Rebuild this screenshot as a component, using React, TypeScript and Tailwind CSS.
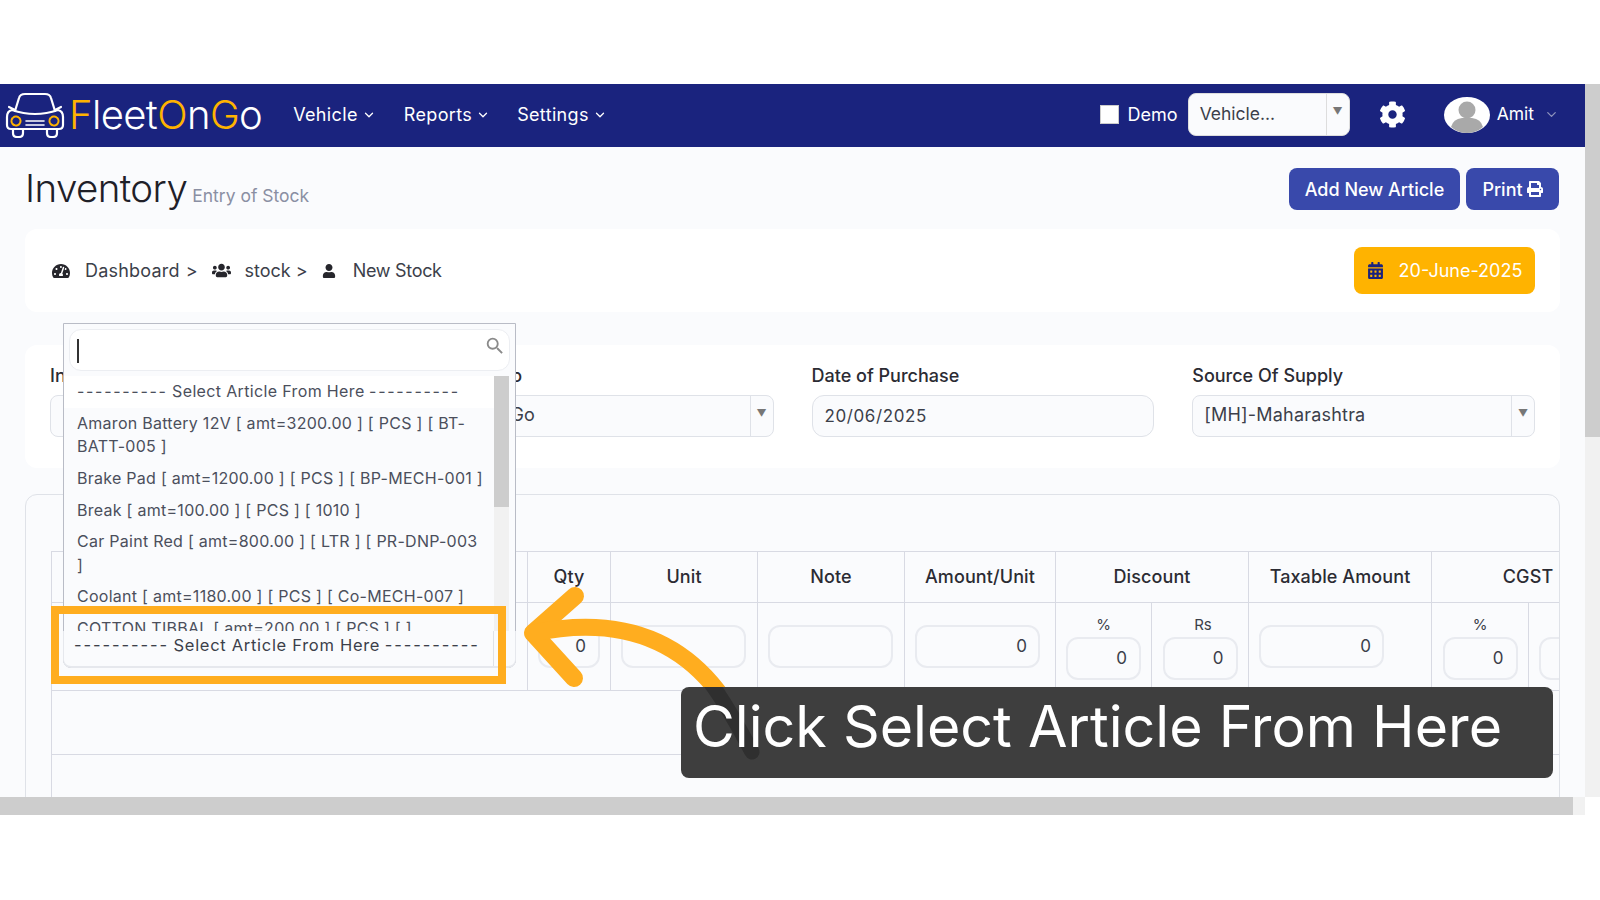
import { FaCalendarAlt, FaCog, FaPrint, FaTachometerAlt, FaUser, FaUsers } from "react-icons/fa";
import { MdSearch } from "react-icons/md";
import { ChevronDown } from "lucide-react";

const listItems = [
  ["Amaron Battery 12V [ amt=3200.00 ] [ PCS ] [ BT-", "BATT-005 ]"],
  ["Brake Pad [ amt=1200.00 ] [ PCS ] [ BP-MECH-001 ]"],
  ["Break [ amt=100.00 ] [ PCS ] [ 1010 ]"],
  ["Car Paint Red [ amt=800.00 ] [ LTR ] [ PR-DNP-003", "]"],
  ["Coolant [ amt=1180.00 ] [ PCS ] [ Co-MECH-007 ]"],
  ["COTTON TIBBAL [ amt=200.00 ] [ PCS ] [ ]"],
];

function CarLogo() {
  return (
    <svg width="62" height="46" viewBox="0 0 62 46" fill="none" stroke="#fff" strokeWidth="2.2" strokeLinecap="round" strokeLinejoin="round">
      <path d="M11 19 L15 6 Q16 2 21 2 H41 Q46 2 47 6 L51 19" />
      <path d="M5 15 L11 18 M57 15 L51 18" />
      <path d="M8 18 Q31 26 54 18 Q59 19 59 25 V33 Q59 37 55 37 H7 Q3 37 3 33 V25 Q3 19 8 18Z" />
      <path d="M22 29 H40 M22 33 H40" strokeWidth="1.6" />
      <path d="M9 37 V41 Q9 45 13 45 H15 Q19 45 19 41 V37 M43 37 V41 Q43 45 47 45 H49 Q53 45 53 41 V37" />
      <circle cx="12" cy="29" r="4.5" stroke="#ffb300" strokeWidth="2" strokeDasharray="2 1" />
      <circle cx="50" cy="29" r="4.5" stroke="#ffb300" strokeWidth="2" strokeDasharray="2 1" />
    </svg>
  );
}

function Avatar() {
  return (
    <svg width="46" height="36" viewBox="0 0 46 36">
      <ellipse cx="23" cy="18" rx="23" ry="18" fill="#fff" />
      <circle cx="23" cy="13" r="8.5" fill="#a9a9a9" />
      <path d="M7 30 Q9 22 18 21 H28 Q37 22 39 30 Q32 36 23 36 Q14 36 7 30Z" fill="#a9a9a9" />
    </svg>
  );
}

function NavItem({ label, className }: { label: string; className: string }) {
  return (
    <div className={`flex items-center gap-[4px] text-[18px] tracking-[0.35px] text-white ${className}`}>
      {label}
      <ChevronDown size={14} strokeWidth={2.2} />
    </div>
  );
}

function FakeSelect({ value, className }: { value: string; className?: string }) {
  return (
    <div className={`flex h-[42px] items-center rounded-lg border border-[#dfe2e8] bg-[#fafbfd] ${className ?? ""}`}>
      <span className="flex-1 truncate pb-[3px] pl-[11px] text-[18px] tracking-[0.2px] text-[#3c3f4a]">{value}</span>
      <span className="flex h-full w-[23px] items-center justify-center border-l border-[#dfe2e8] pb-[6px] text-[10px] text-[#777]">▼</span>
    </div>
  );
}

function Field({ label, children }: { label: string; children: React.ReactNode }) {
  return (
    <div>
      <div className="mb-[7px] h-[24px] text-[18px] font-medium leading-[24px] text-[#2b2b33]">{label}</div>
      {children}
    </div>
  );
}

function CellInput({ value, className }: { value?: string; className: string }) {
  return (
    <div className={`flex items-center justify-end rounded-xl border-2 border-[#e9ebf0] bg-[#fafbfd] text-[17px] text-[#3c3f4a] ${className}`}>
      {value}
    </div>
  );
}

function Th({ children, colSpan }: { children?: React.ReactNode; colSpan?: number }) {
  return (
    <th colSpan={colSpan} className="border border-[#d8dae3] pb-[2px] text-center text-[18px] font-medium tracking-[0.1px] text-[#2b2b33]">
      {children}
    </th>
  );
}

function SubCell({ label, value }: { label: string; value: string }) {
  return (
    <td className="border border-[#d8dae3] align-top">
      <div className="flex flex-col items-center pt-[12px]">
        <span className={`h-[22px] text-[15px] leading-[20px] text-[#3c3f4a] ${label === "Rs" ? "pl-[6px]" : ""}`}>{label}</span>
        <CellInput value={value} className="h-[43px] w-[75px] pr-[12px]" />
      </div>
    </td>
  );
}

function WideCell({ value, width }: { value?: string; width: string }) {
  return (
    <td className="border border-[#d8dae3] px-[10px]">
      <CellInput value={value} className={`h-[43px] pr-[11px] ${width}`} />
    </td>
  );
}

export default function App() {
  return (
    <div className="relative h-[900px] w-[1600px] overflow-hidden bg-white font-['Inter',sans-serif]">
      <div className="h-[84px]" />
      <div className="grid grid-cols-[1585px_15px] grid-rows-[713px_18px]">
        <div className="overflow-hidden bg-[#fafbfd]">
          <nav className="flex h-[63px] items-center bg-[#1a237e] pb-[2px] pl-[4px]">
            <CarLogo />
            <div className="ml-[3px] text-[40px] font-light leading-none tracking-[-0.6px] text-white">
              <span className="text-[#ffb300]">F</span>leet<span className="text-[#ffb300]">O</span>n<span className="text-[#ffb300]">G</span>o
            </div>
            <NavItem label="Vehicle" className="ml-[31px]" />
            <NavItem label="Reports" className="ml-[28px]" />
            <NavItem label="Settings" className="ml-[27px]" />
            <div className="ml-auto h-[19px] w-[19px] border border-[#ccc] bg-white" />
            <span className="ml-[9px] text-[18px] text-white">Demo</span>
            <div className="ml-[10px] flex h-[43px] w-[162px] items-center rounded-lg border border-[#ddd] bg-[#fafbfd]">
              <span className="flex-1 pl-[11px] text-[17.5px] text-[#3c3f4a]">Vehicle...</span>
              <span className="flex h-full w-[23px] items-center justify-center border-l border-[#ddd] pb-[6px] text-[10px] text-[#777]">▼</span>
            </div>
            <FaCog className="ml-[29px] text-white" size={27} />
            <div className="ml-[38px]">
              <Avatar />
            </div>
            <span className="ml-[7px] text-[17.5px] text-white">Amit</span>
            <ChevronDown className="ml-[10px] mr-[26px] text-[#8f93bd]" size={15} />
          </nav>

          <div className="flex h-[63px] items-center justify-between pl-[25px] pr-[26px] pt-[21px]">
            <div className="flex items-baseline">
              <h1 className="text-[38.5px] font-light leading-[40px] tracking-[-0.6px] text-[#1f2028]">Inventory</h1>
              <span className="ml-[5px] text-[17.5px] text-[#8a8fa3]">Entry of Stock</span>
            </div>
            <div className="flex gap-[6px]">
              <button className="h-[42px] w-[171px] rounded-lg bg-[#3949ab] text-[18px] font-medium text-white">Add New Article</button>
              <button className="flex h-[42px] w-[93px] items-center justify-center gap-[4px] rounded-lg bg-[#3949ab] text-[18px] font-medium text-white">
                Print <FaPrint size={16} />
              </button>
            </div>
          </div>

          <div className="mx-[25px] mt-[19px] flex h-[83px] items-center rounded-xl bg-white pl-[27px] pr-[25px] text-[18px] text-[#3c3f4a]">
            <FaTachometerAlt className="text-[#26262c]" size={18} />
            <span className="ml-[15px] tracking-[0.2px]">Dashboard</span>
            <span className="ml-[6px]">&gt;</span>
            <FaUsers className="ml-[14px] text-[#26262c]" size={19} />
            <span className="ml-[14px]">stock</span>
            <span className="ml-[5px]">&gt;</span>
            <FaUser className="ml-[14px] text-[#26262c]" size={14} />
            <span className="ml-[17px] tracking-[-0.3px]">New Stock</span>
            <div className="ml-auto flex h-[47px] w-[181px] items-center justify-center gap-[15px] rounded-lg bg-[#ffb300] text-white">
              <FaCalendarAlt className="text-[#1a237e]" size={17} />
              20-June-2025
            </div>
          </div>

          <div className="mx-[25px] mt-[33px] grid h-[123px] grid-cols-4 gap-x-[38px] rounded-xl bg-white px-[25px] pt-[19px]">
            <Field label="Invoice No">
              <div className="h-[42px] rounded-lg border border-[#dfe2e8] bg-[#fafbfd]" />
            </Field>
            <Field label="Vendor No">
              <FakeSelect value="FleetOnGo" />
            </Field>
            <Field label="Date of Purchase">
              <div className="flex h-[42px] items-center rounded-xl border border-[#dfe2e8] bg-[#fafbfd] pl-[12px] pt-[2px] text-[17px] tracking-[0.6px] text-[#3c3f4a]">20/06/2025</div>
            </Field>
            <Field label="Source Of Supply">
              <FakeSelect value="[MH]-Maharashtra" />
            </Field>
          </div>

          <div className="mx-[25px] mt-[26px] h-[320px] overflow-hidden rounded-t-xl border border-[#dfe2e8] pl-[25px] pt-[56px]">
            <table className="w-[1573px] table-fixed border-collapse">
              <colgroup>
                <col className="w-[476px]" />
                <col className="w-[83px]" />
                <col className="w-[147px]" />
                <col className="w-[147px]" />
                <col className="w-[151px]" />
                <col className="w-[96px]" />
                <col className="w-[97px]" />
                <col className="w-[183px]" />
                <col className="w-[97px]" />
                <col className="w-[96px]" />
              </colgroup>
              <thead>
                <tr className="h-[51px]">
                  <Th>Article</Th>
                  <Th>Qty</Th>
                  <Th>Unit</Th>
                  <Th>Note</Th>
                  <Th>Amount/Unit</Th>
                  <Th colSpan={2}>Discount</Th>
                  <Th>Taxable Amount</Th>
                  <Th colSpan={2}>CGST</Th>
                </tr>
              </thead>
              <tbody>
                <tr className="h-[88px]">
                  <td className="border border-[#d8dae3]" />
                  <td className="border border-[#d8dae3] pl-[10px]">
                    <CellInput value="0" className="h-[43px] w-[62px] pr-[12px]" />
                  </td>
                  <WideCell width="w-[125px]" />
                  <WideCell width="w-[125px]" />
                  <WideCell value="0" width="w-[125px]" />
                  <SubCell label="%" value="0" />
                  <SubCell label="Rs" value="0" />
                  <WideCell value="0" width="w-[125px]" />
                  <SubCell label="%" value="0" />
                  <SubCell label="Rs" value="0" />
                </tr>
                <tr className="h-[64px]">
                  <td colSpan={10} className="border border-[#d8dae3]" />
                </tr>
                <tr className="h-[64px]">
                  <td colSpan={10} className="border border-[#d8dae3]" />
                </tr>
              </tbody>
            </table>
          </div>
        </div>

        <div className="bg-[#f1f1f1]">
          <div className="h-[353px] bg-[#cdcdcd]" />
        </div>
        <div className="bg-[#f1f1f1]">
          <div className="h-full w-[1573px] bg-[#cdcdcd]" />
        </div>
        <div className="bg-white" />
      </div>

      {/* open dropdown */}
      <div className="absolute left-[63px] top-[323px] h-[345px] w-[453px] rounded-b-lg border border-[#b9bcc6] bg-[#fafbfd] text-[16px] text-[#4b4f5c]">
        <div className="relative mx-[5px] mt-[5px] h-[42px] rounded-xl border border-[#eceef2] bg-white">
          <div className="absolute left-[7px] top-[9px] h-[24px] w-[2px] bg-[#333]" />
          <MdSearch className="absolute right-[3px] top-[5px] text-[#8a8a8a]" size={22} />
        </div>
        <div className="flex h-[260px] overflow-hidden pt-[5px]">
          <div className="w-[430px] shrink-0">
            <div className="whitespace-nowrap bg-white py-[4.15px] pl-[13px] leading-[23.4px]">
              <span className="tracking-[1.7px]">----------</span> <span className="tracking-[0.35px]">Select Article From Here</span>{" "}
              <span className="tracking-[1.7px]">----------</span>
            </div>
            {listItems.map((lines) => (
              <div key={lines[0]} className="whitespace-nowrap py-[4.15px] pl-[13px] leading-[23.4px] tracking-[0.27px]">
                {lines.map((line) => (
                  <div key={line}>{line}</div>
                ))}
              </div>
            ))}
          </div>
          <div className="w-[15px] bg-[#f1f1f1]">
            <div className="h-[131px] bg-[#cdcdcd]" />
          </div>
        </div>
        <div className="relative -mx-px h-[37px] rounded-b-lg border-x border-b-2 border-[#e6e8ed] bg-[#fafbfd]">
          <div className="h-[35px] w-[430px] whitespace-nowrap border-r border-[#dfe2e8] pl-[10px] text-[16.5px] leading-[28px] text-[#3c3f4a]">
            <span className="tracking-[1.9px]">----------</span> <span className="tracking-[0.7px]">Select Article From Here</span>{" "}
            <span className="tracking-[1.9px]">----------</span>
          </div>
        </div>
      </div>

      {/* annotation */}
      <div className="absolute left-[51px] top-[605.5px] h-[78px] w-[455px] border-8 border-[#ffad1f]" />
      <svg className="absolute left-[510px] top-[580px]" width="260" height="190" viewBox="0 0 260 190" fill="none" stroke="#ffad1f" strokeWidth="17" strokeLinecap="round" strokeLinejoin="round">
        <path d="M65 16 L23 53 L64 98" strokeWidth="18" />
        <path d="M23 53 C110 35 195 55 242 173" />
      </svg>
      <div className="absolute left-[681px] top-[687px] h-[91px] w-[872px] overflow-hidden rounded-lg bg-[#3e3e3e]">
        <svg className="absolute left-0 top-0" width="100" height="91" viewBox="0 0 100 91" fill="none" stroke="#2f2f2f" strokeWidth="15" strokeLinecap="round">
          <path d="M25 -10 C45 15 60 45 71 65" />
        </svg>
        <div className="relative whitespace-nowrap pl-[12px] text-[57.3px] leading-[79px] text-white">Click Select Article From Here</div>
      </div>
    </div>
  );
}
